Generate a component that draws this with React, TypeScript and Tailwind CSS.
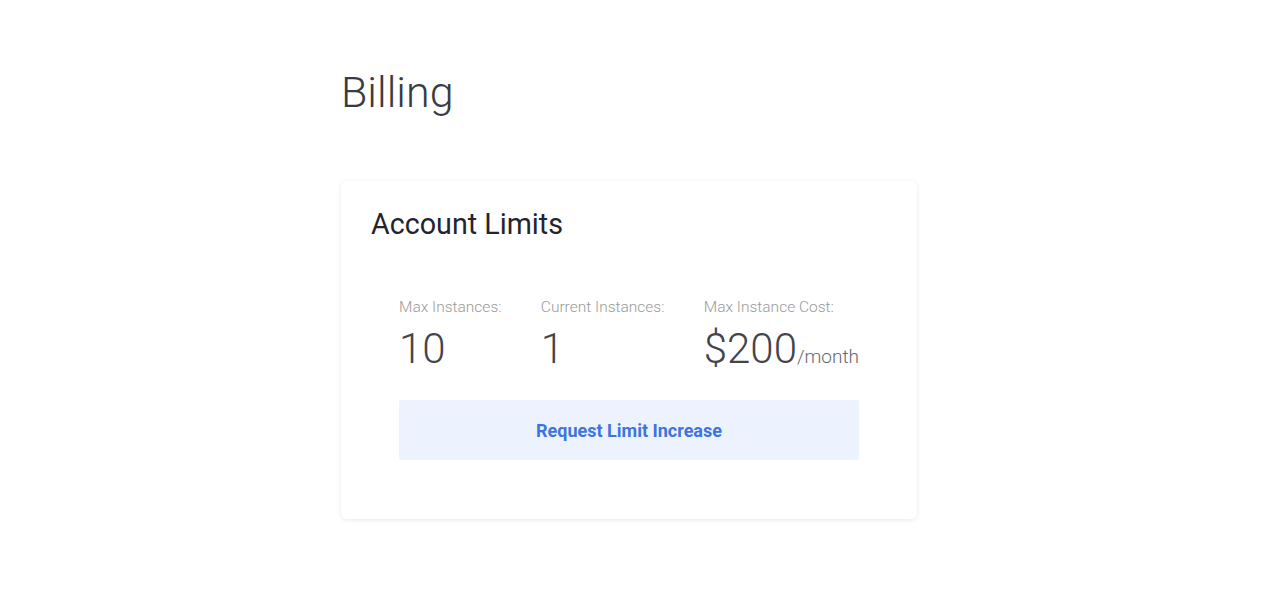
export default function App() {
  return (
    <div className="min-h-screen bg-white pl-[341px] pt-[66px] font-['Roboto',sans-serif]">
      <h1 className="text-[43px] leading-[52px] font-light text-[#3a3a42]">Billing</h1>

      <div className="mt-[63px] w-[576px] rounded-md bg-white shadow-[0_1px_5px_rgba(0,0,0,0.09)] px-[30px] pt-[26px] pb-[59px]">
        <h2 className="text-[28.7px] leading-[34px] font-normal text-[#24242e]">Account Limits</h2>

        <div className="mx-auto mt-[56px] w-[460px]">
          <div className="flex justify-between">
            <div>
              <div className="text-[15.5px] leading-[20px] font-light text-[#9a9a9a]">Max Instances:</div>
              <div className="mt-[8px] text-[42px] leading-[48px] font-light text-[#44444c]">10</div>
            </div>
            <div>
              <div className="text-[15.5px] leading-[20px] font-light text-[#9a9a9a]">Current Instances:</div>
              <div className="mt-[8px] text-[42px] leading-[48px] font-light text-[#44444c]">1</div>
            </div>
            <div>
              <div className="text-[15.5px] leading-[20px] font-light text-[#9a9a9a]">Max Instance Cost:</div>
              <div className="mt-[8px] text-[42px] leading-[48px] font-light text-[#44444c]">
                $200<span className="text-[19px] text-[#66666e]">/month</span>
              </div>
            </div>
          </div>

          <button className="mt-[19px] h-[60px] w-full rounded-[2px] bg-[#edf3fe] text-[18px] font-bold text-[#3d74e0]">
            Request Limit Increase
          </button>
        </div>
      </div>
    </div>
  );
}
